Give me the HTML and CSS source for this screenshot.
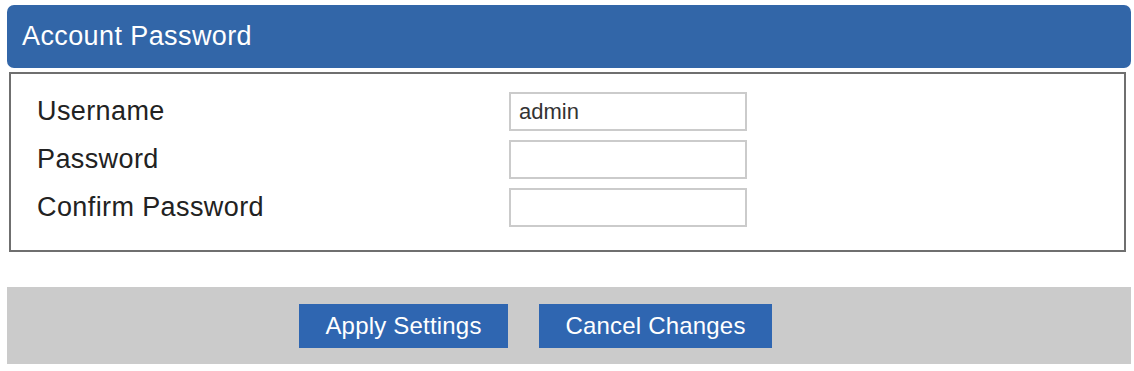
FILE: index.html
```html
<!DOCTYPE html>
<html>
<head>
<meta charset="utf-8">
<link rel="stylesheet" href="styles.css">
</head>
<body>
<div class="page">
  <div class="header">Account Password</div>
  <div class="box">
    <div class="row">
      <label class="label">Username</label>
      <div class="field">admin</div>
    </div>
    <div class="row">
      <label class="label">Password</label>
      <div class="field"></div>
    </div>
    <div class="row">
      <label class="label">Confirm Password</label>
      <div class="field"></div>
    </div>
  </div>
  <div class="actions">
    <button class="btn btn-apply">Apply Settings</button>
    <button class="btn btn-cancel">Cancel Changes</button>
  </div>
</div>
</body>
</html>
```

FILE: styles.css
```css
html, body {
  margin: 0;
  padding: 0;
  background: #ffffff;
}
.page {
  padding: 5px 3px 0 7px;
  font-family: "Liberation Sans", Arial, sans-serif;
}
.header {
  height: 63px;
  box-sizing: border-box;
  background: #3266a8;
  border-radius: 7px;
  color: #ffffff;
  font-size: 27px;
  letter-spacing: 0.4px;
  line-height: 63px;
  padding-left: 15px;
}
.box {
  margin: 4px 5px 0 2px;
  border: 2px solid #6f6f6f;
  height: 180px;
  box-sizing: border-box;
  padding: 18px 0 0 26px;
  display: flex;
  flex-direction: column;
  gap: 9px;
}
.row {
  display: flex;
  align-items: center;
  height: 39px;
}
.label {
  width: 472px;
  font-size: 27px;
  letter-spacing: 0.4px;
  color: #222222;
}
.field {
  width: 238px;
  height: 39px;
  box-sizing: border-box;
  border: 2px solid #cbcbcb;
  font-size: 22px;
  color: #333333;
  padding-left: 8px;
  line-height: 35px;
}
.actions {
  margin-top: 35px;
  height: 77px;
  background: #cbcbcb;
  display: flex;
  align-items: flex-start;
  padding: 17px 0 0 292px;
  box-sizing: border-box;
  gap: 31px;
}
.btn {
  height: 44px;
  border: none;
  background: #2f66b1;
  color: #ffffff;
  font-family: "Liberation Sans", Arial, sans-serif;
  font-size: 24px;
  letter-spacing: 0.2px;
  padding: 0;
}
.btn-apply { width: 209px; }
.btn-cancel { width: 233px; }
```
